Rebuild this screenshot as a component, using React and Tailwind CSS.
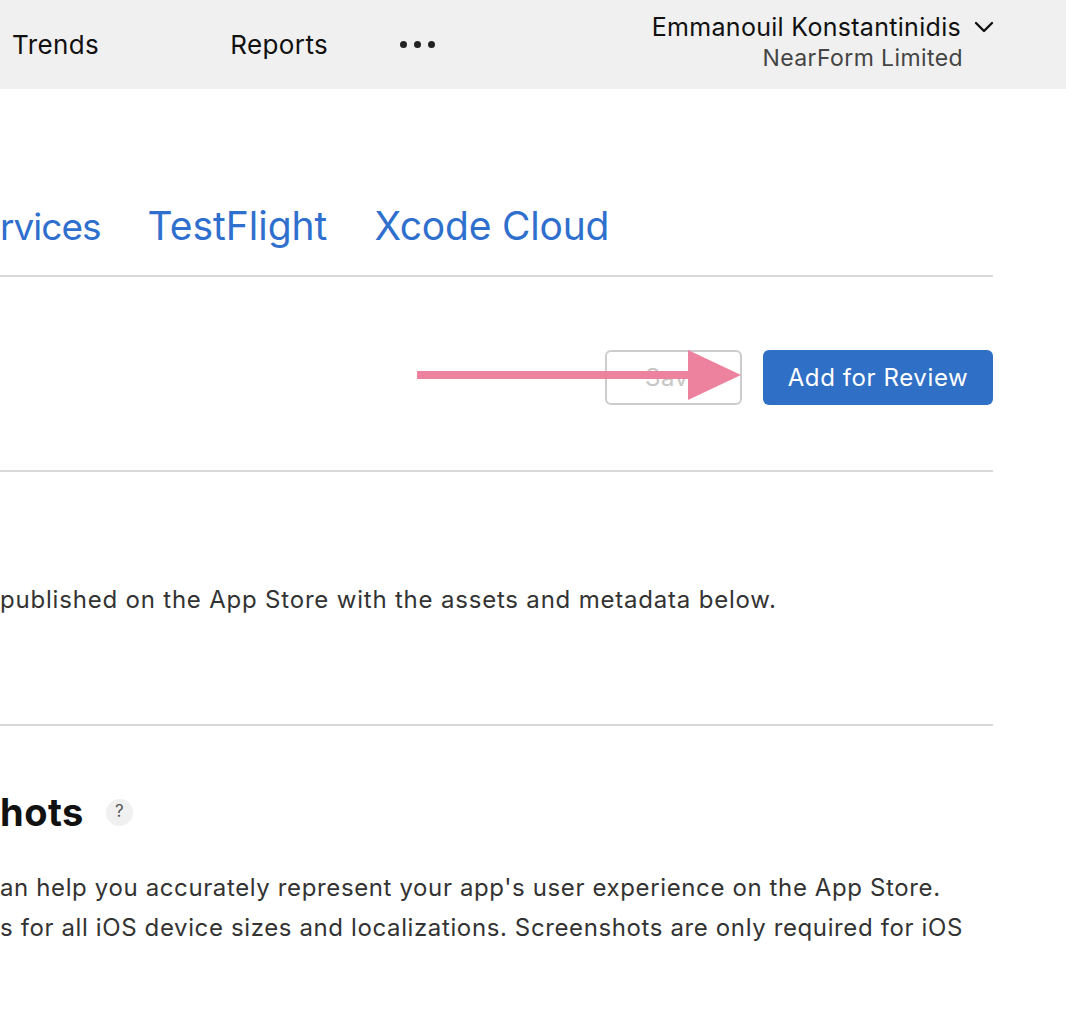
import React from 'react';

const font = { fontFamily: 'Inter, "Noto Sans", sans-serif' };

const Header = () => (
    <div className="h-[89px] bg-[#f0f0f0] flex items-start">
        <div className="flex items-center h-[89px] text-[26px] text-[#111] tracking-[0.4px]">
            <span className="ml-[12px]">Trends</span>
            <span className="ml-[131px]">Reports</span>
            <span className="ml-[72px] flex gap-[7px] items-center">
                <span className="w-[7px] h-[7px] rounded-full bg-[#222]" />
                <span className="w-[7px] h-[7px] rounded-full bg-[#222]" />
                <span className="w-[7px] h-[7px] rounded-full bg-[#222]" />
            </span>
        </div>
        <div className="ml-auto mr-[103px] flex flex-col items-end pt-[11px]">
            <div className="flex items-center gap-[13px]">
                <span className="text-[25px] text-[#111] leading-[32px] tracking-[0.3px]">Emmanouil Konstantinidis</span>
                <svg width="20" height="12" viewBox="0 0 20 12" className="-mr-[31px]">
                    <path d="M2 2 L10 10 L18 2" fill="none" stroke="#111" strokeWidth="2.4" strokeLinecap="round" strokeLinejoin="round" />
                </svg>
            </div>
            <span className="text-[23px] text-[#444] leading-[30px] tracking-[0.4px]">NearForm Limited</span>
        </div>
    </div>
);

const App = () => {
    return (
        <div style={font} className="w-[1066px] h-[1036px] bg-white overflow-hidden">
            <Header />

            <div className="w-[993px]">
                {/* Tabs */}
                <div className="h-[188px] flex items-end pb-[24px] border-b-2 border-[#d9d9d9]">
                    <div className="flex items-baseline text-[39px] leading-[48px] text-[#2f6fcd] whitespace-nowrap">
                        <span className="mr-[47px] text-[37px] tracking-[-1px]">rvices</span>
                        <span className="mr-[47px]">TestFlight</span>
                        <span className="tracking-[-0.2px]">Xcode Cloud</span>
                    </div>
                </div>

                {/* Actions */}
                <div className="relative pt-[73px] pb-[65px] flex justify-end gap-[21px] border-b-2 border-[#d9d9d9]">
                    <button className="w-[137px] h-[55px] rounded-[6px] border-2 border-[#cccccc] text-[24px] tracking-[0.5px] text-[#c6c6c6] text-left pl-[38px]">
                        Save
                    </button>
                    <button className="w-[230px] h-[55px] rounded-[6px] bg-[#2f6fc6] text-[24px] tracking-[0.6px] text-white">
                        Add for Review
                    </button>
                    {/* annotation arrow */}
                    <div className="absolute left-[417px] top-[73px] w-[324px] h-[50px] flex items-center">
                        <div className="w-[275px] h-[8px] bg-[#ec829e]" />
                        <svg width="53" height="50" viewBox="0 0 53 50" className="-ml-[4px]">
                            <polygon points="0,0 53,25 0,50" fill="#ec829e" />
                        </svg>
                    </div>
                </div>

                {/* Description */}
                <div className="pt-[108px] pb-[104px] border-b-2 border-[#d9d9d9]">
                    <p className="text-[24px] leading-[40px] tracking-[0.8px] text-[#333] whitespace-nowrap">
                        published on the App Store with the assets and metadata below.
                    </p>
                </div>

                {/* Screenshots */}
                <div className="pt-[62px]">
                    <div className="flex items-center gap-[22px]">
                        <h2 className="text-[38px] leading-[48px] font-bold text-[#111] tracking-[0.5px]">hots</h2>
                        <span className="w-[27px] h-[27px] rounded-full bg-[#f0f0f0] text-[#555] text-[17px] flex items-center justify-center">?</span>
                    </div>
                    <div className="mt-[32px] text-[24px] leading-[40px] tracking-[0.62px] text-[#333] whitespace-nowrap">
                        <p>an help you accurately represent your app's user experience on the App Store.</p>
                        <p>s for all iOS device sizes and localizations. Screenshots are only required for iOS</p>
                    </div>
                </div>
            </div>
        </div>
    );
};

export default App;
